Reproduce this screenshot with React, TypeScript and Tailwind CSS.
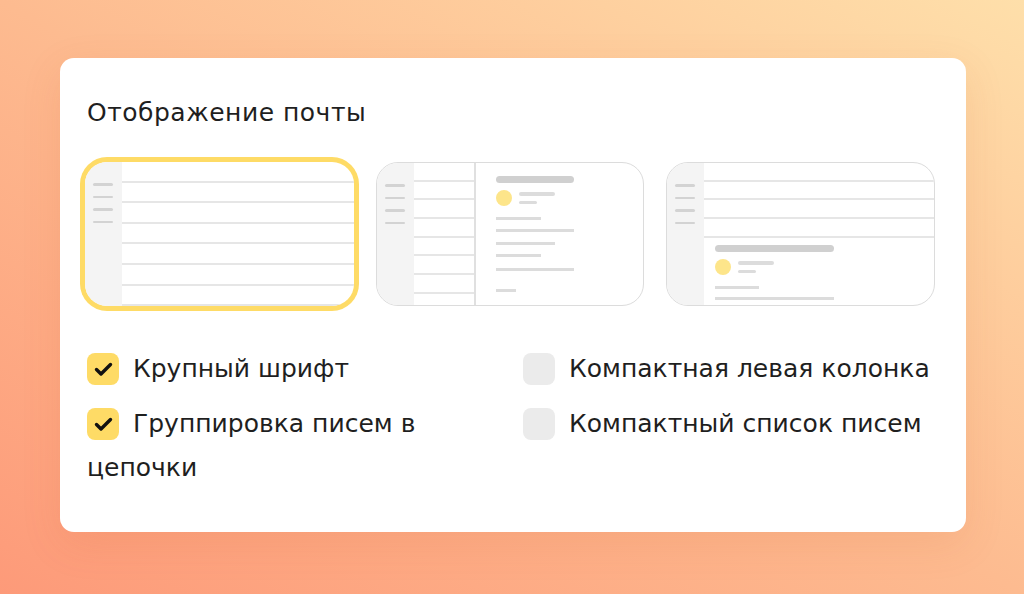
import React from 'react';

const font = { fontFamily: '"DejaVu Sans", "Open Sans", sans-serif' };

function SideBar() {
  return (
    <div className="w-[37px] shrink-0 bg-[#f4f4f4] pt-[21px] pl-[8px] flex flex-col gap-[10px]">
      <div className="w-[20px] h-[2.5px] rounded-full bg-[#d3d3d3]" />
      <div className="w-[20px] h-[2.5px] rounded-full bg-[#d3d3d3]" />
      <div className="w-[20px] h-[2.5px] rounded-full bg-[#d3d3d3]" />
      <div className="w-[20px] h-[2.5px] rounded-full bg-[#d3d3d3]" />
    </div>
  );
}

function Rows({ count, height }: { count: number; height: string }) {
  return (
    <>
      {Array.from({ length: count }).map((_, i) => (
        <div key={i} className={`${height} shrink-0 border-b-2 border-[#e6e6e6]`} />
      ))}
    </>
  );
}

function Letter() {
  return (
    <div className="flex items-center gap-[7px]">
      <div className="w-[16px] h-[16px] rounded-full bg-[#fde58a]" />
      <div className="flex flex-col gap-[5px]">
        <div className="w-[36px] h-[4px] rounded-sm bg-[#dcdcdc]" />
        <div className="w-[18px] h-[3px] rounded-sm bg-[#dcdcdc]" />
      </div>
    </div>
  );
}

function ThumbList() {
  return (
    <div className="h-[144px] rounded-[22px] overflow-hidden bg-white ring-[5px] ring-[#fedb66] flex">
      <SideBar />
      <div className="flex-1 flex flex-col">
        <Rows count={7} height="h-[20.6px]" />
      </div>
    </div>
  );
}

function ThumbColumns() {
  return (
    <div className="h-[144px] rounded-[22px] overflow-hidden bg-white border-[1.5px] border-[#dcdcdc] flex">
      <SideBar />
      <div className="w-[62px] shrink-0 flex flex-col border-r-2 border-[#e0e0e0]">
        <Rows count={8} height="h-[18.7px]" />
      </div>
      <div className="flex-1 pl-[20px] pt-[13px] flex flex-col">
        <div className="w-[78px] h-[7px] rounded-sm bg-[#d0d0d0]" />
        <div className="mt-[7px]">
          <Letter />
        </div>
        <div className="mt-[11px] w-[45px] h-[3px] bg-[#dcdcdc]" />
        <div className="mt-[9px] w-[78px] h-[3px] bg-[#dcdcdc]" />
        <div className="mt-[10px] w-[59px] h-[3px] bg-[#dcdcdc]" />
        <div className="mt-[9px] w-[45px] h-[3px] bg-[#dcdcdc]" />
        <div className="mt-[11px] w-[78px] h-[3px] bg-[#dcdcdc]" />
        <div className="mt-[18px] w-[20px] h-[3px] bg-[#dcdcdc]" />
      </div>
    </div>
  );
}

function ThumbPreview() {
  return (
    <div className="h-[144px] rounded-[22px] overflow-hidden bg-white border-[1.5px] border-[#dcdcdc] flex">
      <SideBar />
      <div className="flex-1 flex flex-col">
        <Rows count={4} height="h-[18.7px]" />
        <div className="pl-[11px] pt-[7px] flex flex-col">
          <div className="w-[119px] h-[7px] rounded-sm bg-[#d0d0d0]" />
          <div className="mt-[7px]">
            <Letter />
          </div>
          <div className="mt-[11px] w-[44px] h-[3px] bg-[#dcdcdc]" />
          <div className="mt-[8px] w-[119px] h-[3px] bg-[#dcdcdc]" />
        </div>
      </div>
    </div>
  );
}

function Check({ checked }: { checked: boolean }) {
  return (
    <span
      className={`inline-flex align-top mt-[6px] mr-[14px] w-8 h-8 rounded-[8px] items-center justify-center ${
        checked ? 'bg-[#fedb66]' : 'bg-[#ebebeb]'
      }`}
    >
      {checked && (
        <svg width="32" height="32" viewBox="0 0 32 32" fill="none">
          <path d="M9.5 16.5l4.5 4.5L23.5 11.5" stroke="#111" strokeWidth="3.4" strokeLinecap="round" strokeLinejoin="round" />
        </svg>
      )}
    </span>
  );
}

function Option({ checked, label }: { checked: boolean; label: string }) {
  return (
    <p className="text-[25px] leading-[44px] text-[#1f1f1f]">
      <Check checked={checked} />
      {label}
    </p>
  );
}

export default function App() {
  return (
    <div
      className="w-[1024px] h-[594px] overflow-hidden pl-[60px] pt-[58px] bg-linear-to-tr from-[#fd9a79] via-[#fdbb90] to-[#fedfaa]"
      style={font}
    >
      <div className="w-[906px] h-[474px] bg-white rounded-[14px] shadow-[0_12px_40px_rgba(200,90,40,0.12)] pl-[25px] pr-[31px] pt-[40px]">
        <h1 className="pl-[2px] text-[25px] leading-[30px] tracking-[0.5px] text-[#1f1f1f]">Отображение почты</h1>

        <div className="mt-[34px] grid grid-cols-3 gap-[22px]">
          <ThumbList />
          <ThumbColumns />
          <ThumbPreview />
        </div>

        <div className="mt-[41px] pl-[2px] grid grid-cols-2 gap-x-[24px]">
          <div className="flex flex-col gap-[11px]">
            <Option checked label="Крупный шрифт" />
            <Option checked label="Группировка писем в цепочки" />
          </div>
          <div className="flex flex-col gap-[11px]">
            <Option checked={false} label="Компактная левая колонка" />
            <Option checked={false} label="Компактный список писем" />
          </div>
        </div>
      </div>
    </div>
  );
}
